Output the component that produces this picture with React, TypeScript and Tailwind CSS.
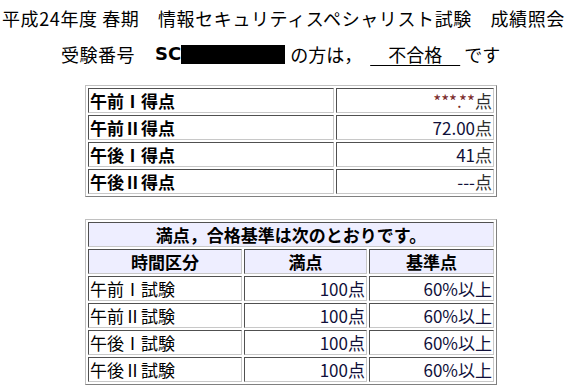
import React from 'react';

const jp = { fontFamily: '"Noto Sans CJK JP", "Noto Sans", sans-serif' };

const tableCls =
  'border-separate border-spacing-[2px] border border-t-[#c0c0c0] border-l-[#c0c0c0] border-r-[#808080] border-b-[#808080] w-[412px]';
const cellCls =
  'border border-t-[#505050] border-l-[#505050] border-r-[#c8c8c8] border-b-[#c8c8c8] h-[25px] p-0 px-[1px] text-[17px] leading-[22px] align-middle';

const scores = [
  { label: '午前Ⅰ得点', value: '***.**', red: true },
  { label: '午前Ⅱ得点', value: '72.00' },
  { label: '午後Ⅰ得点', value: '41' },
  { label: '午後Ⅱ得点', value: '---' },
];

const exams = ['午前Ⅰ試験', '午前Ⅱ試験', '午後Ⅰ試験', '午後Ⅱ試験'];

export default function App() {
  return (
    <div className="w-[585px] h-[392px] bg-white text-black overflow-hidden" style={jp}>
      {/* title */}
      <div className="pt-[7px] pl-[2px] text-[18px] leading-[22px] whitespace-nowrap tracking-[0.6px]">
        平成24年度 春期　情報セキュリティスペシャリスト試験　成績照会
      </div>

      {/* result line */}
      <div className="mt-[14px] pl-[61px] flex items-center h-[22px] text-[18px] leading-[22px] whitespace-nowrap">
        <span className="tracking-[0.5px]">受験番号</span>
        <span
          className="ml-[20px] font-bold text-[18px]"
          style={{ fontFamily: '"DejaVu Sans", Verdana, sans-serif' }}
        >
          SC
        </span>
        <span className="inline-block w-[104px] h-[19px] bg-black" />
        <span className="ml-[5px]">の方は，</span>
        <span className="ml-[8px] underline underline-offset-[3px] whitespace-pre">　不合格　</span>
        <span className="ml-[4px]">です</span>
      </div>

      {/* scores */}
      <table className={`${tableCls} ml-[85px] mt-[20px]`}>
        <tbody>
          {scores.map((s) => (
            <tr key={s.label}>
              <td className={`${cellCls} w-[246px] font-bold`}>{s.label}</td>
              <td className={`${cellCls} w-[158px] text-right text-[#10103a]`}>
                <span className={s.red ? 'text-[#7a2a2a]' : ''}>{s.value}</span>
                <span className="text-[#303030]">点</span>
              </td>
            </tr>
          ))}
        </tbody>
      </table>

      {/* criteria */}
      <table className={`${tableCls} ml-[85px] mt-[22px]`}>
        <tbody>
          <tr>
            <td colSpan={3} className={`${cellCls} bg-[#eeeeff] text-center font-bold`}>
              満点，合格基準は次のとおりです。
            </td>
          </tr>
          <tr>
            <td className={`${cellCls} w-[154px] bg-[#eeeeff] text-center font-bold`}>時間区分</td>
            <td className={`${cellCls} w-[123px] bg-[#eeeeff] text-center font-bold`}>満点</td>
            <td className={`${cellCls} w-[125px] bg-[#eeeeff] text-center font-bold`}>基準点</td>
          </tr>
          {exams.map((e) => (
            <tr key={e}>
              <td className={cellCls}>{e}</td>
              <td className={`${cellCls} text-right text-[#10103a]`}>100点</td>
              <td className={`${cellCls} text-right text-[#10103a]`}>60%以上</td>
            </tr>
          ))}
        </tbody>
      </table>
    </div>
  );
}
